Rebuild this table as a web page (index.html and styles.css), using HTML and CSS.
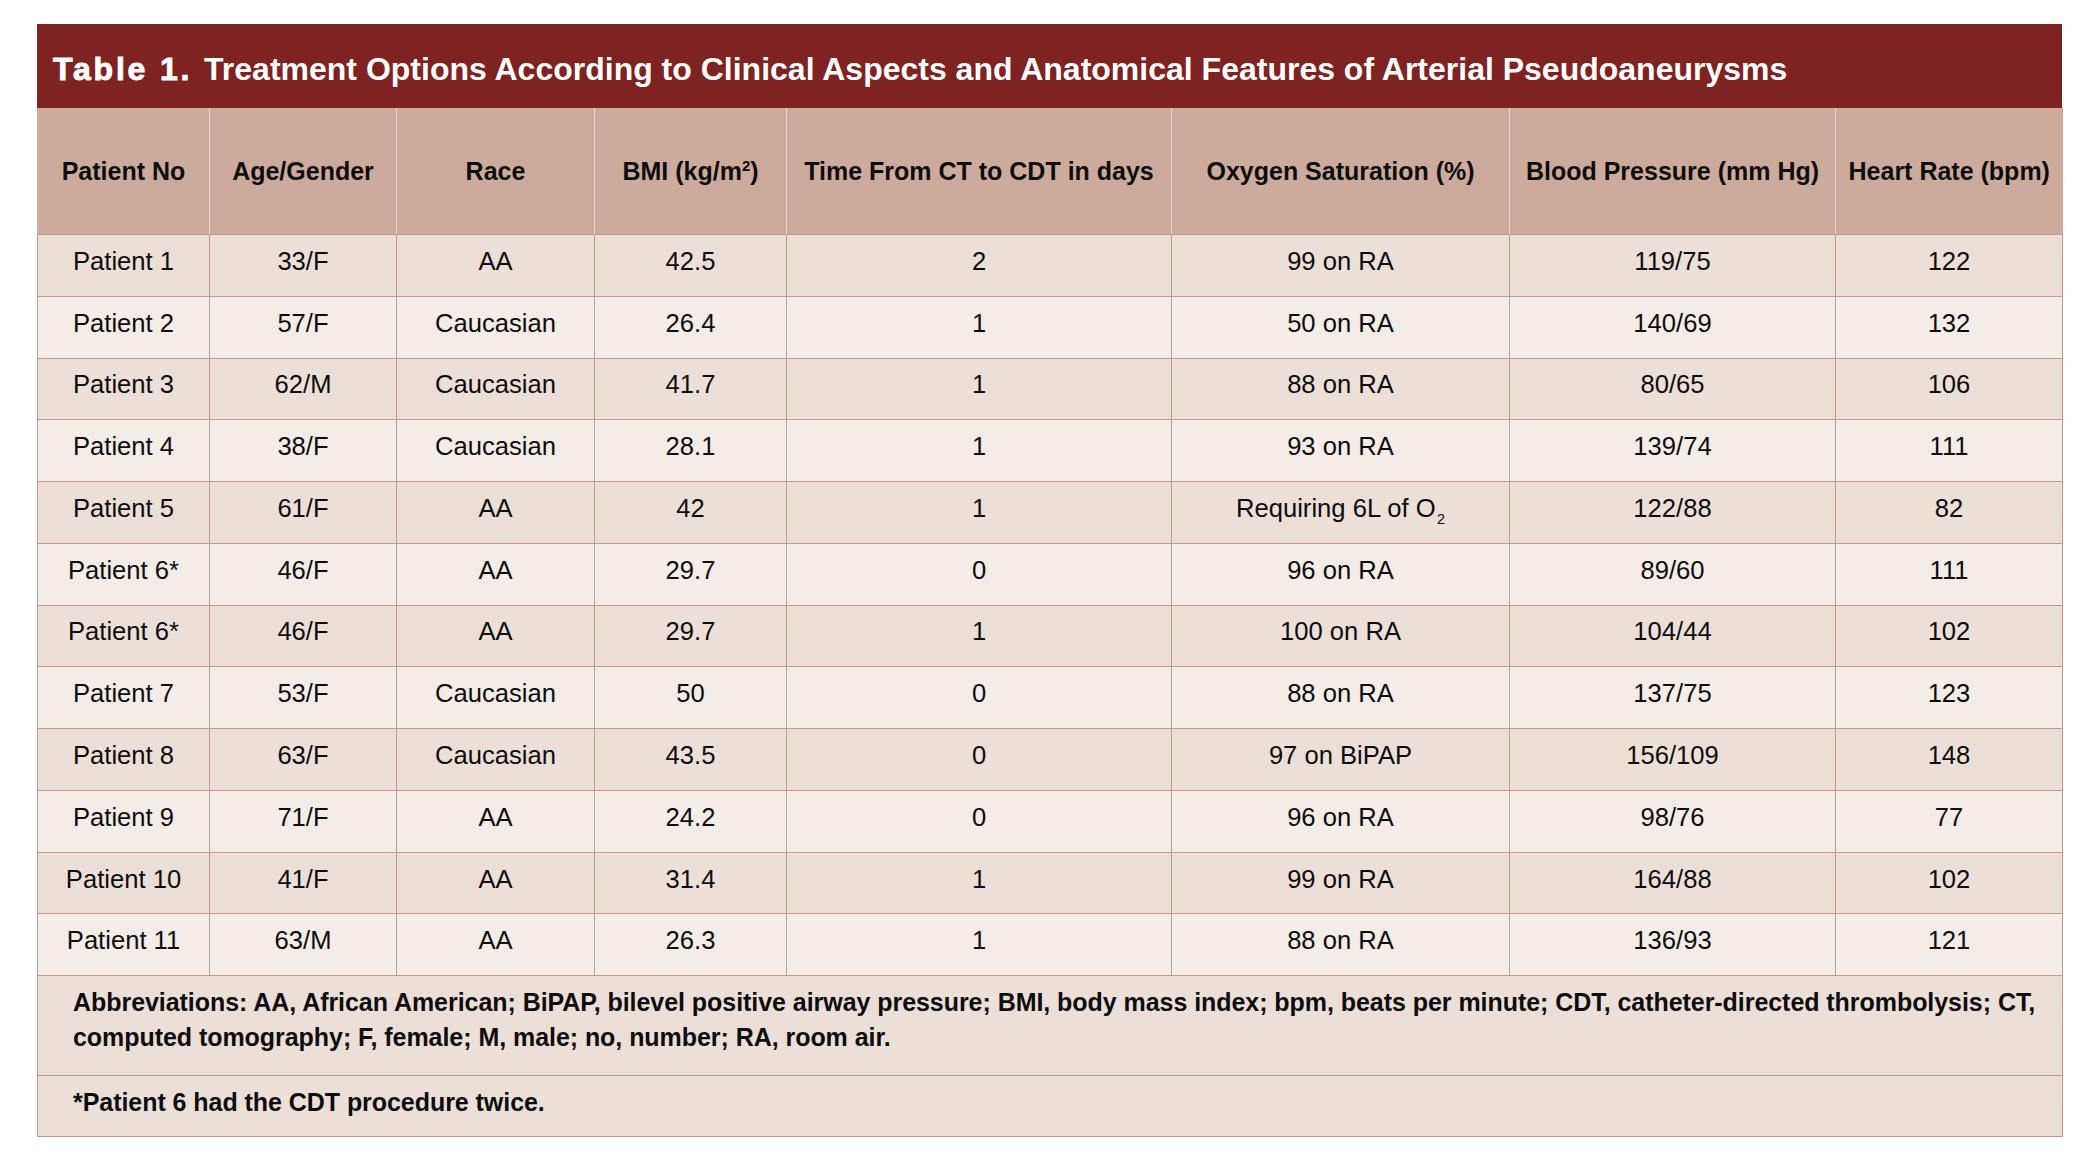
FILE: index.html
```html
<!DOCTYPE html>
<html lang="en">
<head>
<meta charset="utf-8">
<title>Table 1</title>
<link rel="stylesheet" href="styles.css">
</head>
<body>
<div class="figure">
  <div class="caption"><span class="label">Table 1.</span> Treatment Options According to Clinical Aspects and Anatomical Features of Arterial Pseudoaneurysms</div>
  <table class="data">
    <colgroup>
      <col class="c1"><col class="c2"><col class="c3"><col class="c4"><col class="c5"><col class="c6"><col class="c7"><col class="c8">
    </colgroup>
    <thead>
      <tr>
        <th>Patient No</th>
        <th>Age/Gender</th>
        <th>Race</th>
        <th>BMI (kg/m<sup>2</sup>)</th>
        <th>Time From CT to CDT in days</th>
        <th>Oxygen Saturation (%)</th>
        <th>Blood Pressure (mm Hg)</th>
        <th>Heart Rate (bpm)</th>
      </tr>
    </thead>
    <tbody>
      <tr class="odd"><td>Patient 1</td><td>33/F</td><td>AA</td><td>42.5</td><td>2</td><td>99 on RA</td><td>119/75</td><td>122</td></tr>
      <tr class="even"><td>Patient 2</td><td>57/F</td><td>Caucasian</td><td>26.4</td><td>1</td><td>50 on RA</td><td>140/69</td><td>132</td></tr>
      <tr class="odd"><td>Patient 3</td><td>62/M</td><td>Caucasian</td><td>41.7</td><td>1</td><td>88 on RA</td><td>80/65</td><td>106</td></tr>
      <tr class="even"><td>Patient 4</td><td>38/F</td><td>Caucasian</td><td>28.1</td><td>1</td><td>93 on RA</td><td>139/74</td><td>111</td></tr>
      <tr class="odd"><td>Patient 5</td><td>61/F</td><td>AA</td><td>42</td><td>1</td><td>Requiring 6L of O<sub>2</sub></td><td>122/88</td><td>82</td></tr>
      <tr class="even"><td>Patient 6*</td><td>46/F</td><td>AA</td><td>29.7</td><td>0</td><td>96 on RA</td><td>89/60</td><td>111</td></tr>
      <tr class="odd"><td>Patient 6*</td><td>46/F</td><td>AA</td><td>29.7</td><td>1</td><td>100 on RA</td><td>104/44</td><td>102</td></tr>
      <tr class="even"><td>Patient 7</td><td>53/F</td><td>Caucasian</td><td>50</td><td>0</td><td>88 on RA</td><td>137/75</td><td>123</td></tr>
      <tr class="odd"><td>Patient 8</td><td>63/F</td><td>Caucasian</td><td>43.5</td><td>0</td><td>97 on BiPAP</td><td>156/109</td><td>148</td></tr>
      <tr class="even"><td>Patient 9</td><td>71/F</td><td>AA</td><td>24.2</td><td>0</td><td>96 on RA</td><td>98/76</td><td>77</td></tr>
      <tr class="odd"><td>Patient 10</td><td>41/F</td><td>AA</td><td>31.4</td><td>1</td><td>99 on RA</td><td>164/88</td><td>102</td></tr>
      <tr class="even"><td>Patient 11</td><td>63/M</td><td>AA</td><td>26.3</td><td>1</td><td>88 on RA</td><td>136/93</td><td>121</td></tr>
    </tbody>
    <tfoot>
      <tr class="abbr"><td colspan="8">Abbreviations: AA, African American; BiPAP, bilevel positive airway pressure; BMI, body mass index; bpm, beats per minute; CDT, catheter-directed thrombolysis; CT, computed tomography; F, female; M, male; no, number; RA, room air.</td></tr>
      <tr class="note"><td colspan="8">*Patient 6 had the CDT procedure twice.</td></tr>
    </tfoot>
  </table>
</div>
</body>
</html>
```

FILE: styles.css
```css
html, body {
  margin: 0;
  padding: 0;
  background: #ffffff;
}

body {
  padding: 24px 28px 0 37px;
  font-family: "Liberation Sans", Arial, sans-serif;
  color: #0d0d0d;
}

.figure {
  width: 2025px;
}

.caption {
  height: 84px;
  box-sizing: border-box;
  background: #7f2222;
  color: #ffffff;
  font-size: 32px;
  font-weight: bold;
  line-height: 77px;
  padding-top: 7px;
  padding-left: 16px;
  white-space: nowrap;
}

.caption .label {
  letter-spacing: 2.8px;
  -webkit-text-stroke: 0.9px #ffffff;
  margin-right: 3px;
}

.data {
  width: 2025px;
  border-collapse: collapse;
  table-layout: fixed;
  font-size: 25px;
}

.c1 { width: 172px; }
.c2 { width: 187px; }
.c3 { width: 198px; }
.c4 { width: 192px; }
.c5 { width: 385px; }
.c6 { width: 338px; }
.c7 { width: 326px; }
.c8 { width: 227px; }

.data th {
  background: #cdab9c;
  height: 126px;
  padding: 0;
  font-weight: bold;
  text-align: center;
  vertical-align: middle;
  border-left: 1px solid #e9d7cd;
  border-bottom: 1px solid #c4998a;
  white-space: nowrap;
}

.data th:first-child {
  border-left: 1px solid #cdab9c;
}

.data th sup {
  font-size: 15px;
  line-height: 0;
  vertical-align: 9px;
}

.data td {
  box-sizing: border-box;
  height: 61.78px;
  padding: 0 0 8px 0;
  text-align: center;
  vertical-align: middle;
  border-bottom: 1px solid #c4998a;
  white-space: nowrap;
}

.data tbody td {
  font-size: 25.6px;
}

.data tbody tr.odd td {
  background: #ecdfd8;
  border-left: 1px solid #c4998a;
}

.data tbody tr.even td {
  background: #f4ece7;
  border-left: 1px solid #a9a6a4;
}

.data tbody td:last-child {
  border-right: 1px solid #c4998a;
}

.data td sub {
  font-size: 15px;
  line-height: 0;
  vertical-align: -7px;
  margin-left: 1px;
}

.data tfoot td {
  background: #ecdfd8;
  text-align: left;
  font-weight: bold;
  white-space: normal;
  border-left: 1px solid #c4998a;
  border-right: 1px solid #c4998a;
  padding: 0 0 0 35px;
  letter-spacing: -0.05px;
}

.data tfoot tr.abbr td {
  height: 99.7px;
  line-height: 35px;
  padding-bottom: 12px;
}

.data tfoot tr.note td {
  height: 61.6px;
  padding-bottom: 8px;
}
```
